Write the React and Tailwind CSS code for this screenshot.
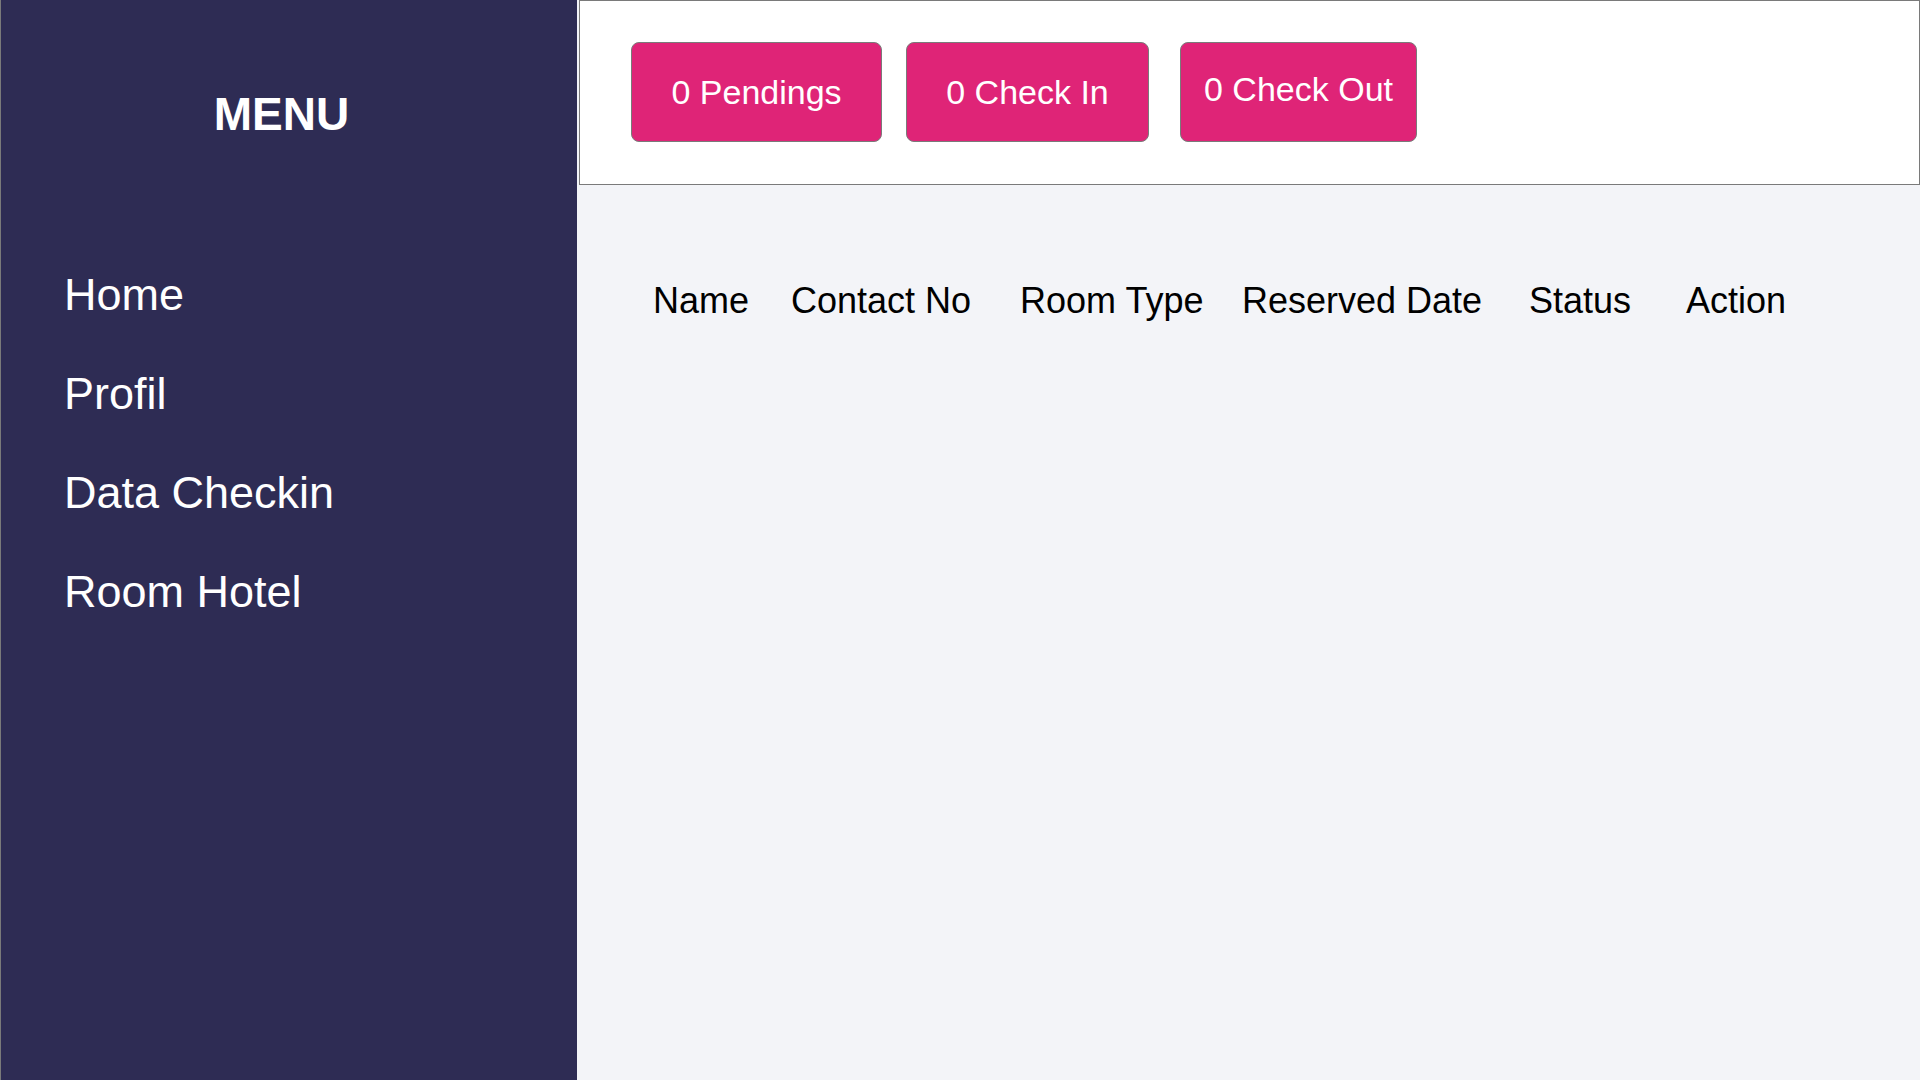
import { useState } from 'react'

const FONT = { fontFamily: '"Comic Sans MS", "Liberation Sans", Arial, sans-serif' }

const menu = ['Home', 'Profil', 'Data Checkin', 'Room Hotel']

const columns = [
  { label: 'Name', w: 'w-[138px]' },
  { label: 'Contact No', w: 'w-[229px]' },
  { label: 'Room Type', w: 'w-[222px]' },
  { label: 'Reserved Date', w: 'w-[287px]' },
  { label: 'Status', w: 'w-[157px]' },
  { label: 'Action', w: 'w-[160px]' },
]

export default function App() {
  const [counts] = useState({ pending: 0, checkIn: 0, checkOut: 0 })

  return (
    <div className="flex h-screen w-full overflow-hidden" style={FONT}>
      <aside className="w-[577px] shrink-0 h-full bg-[#2e2c54] border-l border-[#7a7a7a]">
        <h1 className="pt-[91px] pr-[15px] text-center text-white font-bold text-[46px] leading-none">MENU</h1>
        <nav className="mt-[108px] pl-[63px]">
          {menu.map(item => (
            <a key={item} href="#" className="block text-white text-[45px] leading-[99px]">
              {item}
            </a>
          ))}
        </nav>
      </aside>

      <main className="flex-1 h-full bg-[#f3f4f8]">
        <header className="h-[185px] ml-[2px] bg-white border border-[#7a7a7a] pl-[51px] pt-[41px] flex items-start">
          <button className="w-[251px] h-[100px] rounded-lg bg-[#df2477] border border-[#7a7a7a] text-white text-[34px] leading-none">
            {counts.pending} Pendings
          </button>
          <button className="ml-[24px] w-[243px] h-[100px] rounded-lg bg-[#df2477] border border-[#7a7a7a] text-white text-[34px] leading-none">
            {counts.checkIn} Check In
          </button>
          <button className="ml-[31px] w-[237px] h-[100px] rounded-lg bg-[#df2477] border border-[#7a7a7a] text-white text-[34px] leading-none pb-[6px]">
            {counts.checkOut} Check Out
          </button>
        </header>

        <div className="pt-[98px] pl-[76px]">
          <table className="border-collapse">
            <thead>
              <tr>
                {columns.map(c => (
                  <th key={c.label} className={`${c.w} p-0 text-left font-normal text-black text-[36px] leading-none whitespace-nowrap`}>
                    {c.label}
                  </th>
                ))}
              </tr>
            </thead>
            <tbody></tbody>
          </table>
        </div>
      </main>
    </div>
  )
}
